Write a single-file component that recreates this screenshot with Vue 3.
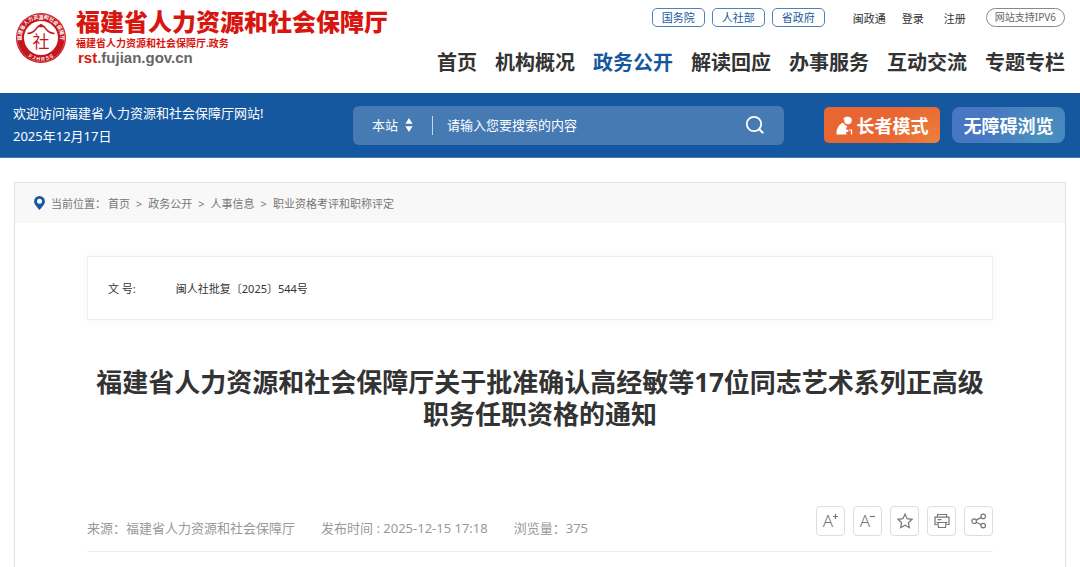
<template>
  <div class="page">
    <header class="header">
      <a class="logo" href="#">
        <svg class="logo__seal" viewBox="0 0 52 52" aria-hidden="true">
          <defs>
            <path id="seal-top" d="M7.4 31.5A19.4 19.4 0 1 1 44.6 31.5" />
            <path id="seal-bottom" d="M6 36.5A22.6 22.6 0 0 0 46 36.5" />
          </defs>
          <circle cx="26" cy="26" r="25" fill="#c4161c" />
          <circle cx="26" cy="26" r="23.8" fill="none" stroke="#e88" stroke-width=".5" />
          <circle cx="26" cy="26" r="17" fill="#fff" />
          <text class="seal-ring" text-anchor="middle">
            <textPath href="#seal-top" startOffset="50%">福建省人力资源和社会保障厅</textPath>
          </text>
          <text class="seal-ring seal-ring--latin" text-anchor="middle">
            <textPath href="#seal-bottom" startOffset="50%">F J H R S S</textPath>
          </text>
          <path
            d="M12.500 21.500c4-.2 6.500-1.800 8.500-4.500l2-2.500h6l2 2.500c2 2.700 4.500 4.300 8.500 4.500M23 14.500l3-2 3 2"
            fill="none"
            stroke="#c4161c"
            stroke-width="1.4"
          />
          <text class="seal-char" x="26" y="36" text-anchor="middle">社</text>
        </svg>
        <span class="logo__text">
          <span class="logo__name">福建省人力资源和社会保障厅</span>
          <span class="logo__sub">福建省人力资源和社会保障厅.政务</span>
          <span class="logo__domain"><b>rst</b>.fujian.gov.cn</span>
        </span>
      </a>
      <div class="header__right">
        <div class="top-links">
          <div class="top-links__gov">
            <a v-for="item in govLinks" :key="item" class="pill" href="#">{{ item }}</a>
          </div>
          <div class="top-links__user">
            <a href="#">闽政通</a>
            <a href="#">登录</a>
            <a class="register" href="#">注册</a>
          </div>
          <span class="pill pill--gray">网站支持IPV6</span>
        </div>
        <nav class="nav">
          <a
            v-for="item in navItems"
            :key="item"
            href="#"
            :class="{ active: item === activeNav }"
            >{{ item }}</a
          >
        </nav>
      </div>
    </header>

    <section class="banner">
      <div class="banner__welcome">
        <div>欢迎访问福建省人力资源和社会保障厅网站!</div>
        <div>2025年12月17日</div>
      </div>
      <form class="search" @submit.prevent>
        <label class="search__scope">
          <select v-model="scope" aria-label="搜索范围">
            <option>本站</option>
          </select>
          <svg width="8" height="14" viewBox="0 0 8 14" aria-hidden="true">
            <path d="M4 0l3.600 5.800H.4zM4 14L.4 8.200h7.200z" fill="#fff" />
          </svg>
        </label>
        <input v-model="keyword" type="text" placeholder="请输入您要搜索的内容" aria-label="搜索" />
        <button class="search__btn" type="submit" aria-label="搜索">
          <svg width="20" height="20" viewBox="0 0 20 20" aria-hidden="true">
            <circle cx="9" cy="9" r="7.200" fill="none" stroke="#fff" stroke-width="1.800" />
            <path d="M14.300 14.300l3.200 3.200" stroke="#fff" stroke-width="2.200" stroke-linecap="round" />
          </svg>
        </button>
      </form>
      <div class="banner__modes">
        <button class="mode mode--elder" type="button">
          <svg width="17" height="19" viewBox="0 0 17 19" aria-hidden="true">
            <circle cx="12" cy="4.500" r="3.700" fill="#fff" />
            <path d="M7 3l2.500-2.300 3 .3-3 3z" fill="#fff" />
            <path
              d="M.5 18.500C.3 12.500 3 8 7.200 6.800c1.200 2 2.600 3 4.200 3.300l-1.400 3 2.600 1.500-.7 1.700-2-.7.6 2.900z"
              fill="#fff"
            />
            <path d="M13 14h2.500v4.500" fill="none" stroke="#fff" stroke-width="1.200" />
          </svg>
          长者模式
        </button>
        <button class="mode mode--access" type="button">无障碍浏览</button>
      </div>
    </section>

    <main class="main">
      <div class="crumbs">
        <svg width="11" height="14" viewBox="0 0 11 14" aria-hidden="true">
          <path
            d="M5.500 0A5.400 5.400 0 0 0 .1 5.400C.1 8.800 3.200 10.800 5.500 14c2.300-3.200 5.400-5.200 5.400-8.600A5.400 5.400 0 0 0 5.500 0z"
            fill="#16589f"
          />
          <circle cx="5.500" cy="5.300" r="2.500" fill="#fff" />
        </svg>
        <span class="crumbs__label">当前位置：</span>
        <template v-for="(item, i) in crumbs" :key="item">
          <span v-if="i">&gt;</span>
          <a href="#">{{ item }}</a>
        </template>
      </div>

      <article class="article">
        <dl class="doc">
          <dt>文 号:</dt>
          <dd>闽人社批复〔2025〕544号</dd>
        </dl>
        <h1 class="title">
          福建省人力资源和社会保障厅关于批准确认高经敏等17位同志艺术系列正高级<br />职务任职资格的通知
        </h1>
        <div class="meta">
          <div class="meta__info">
            <span>来源：福建省人力资源和社会保障厅</span>
            <span>发布时间 : 2025-12-15 17:18</span>
            <span>浏览量：375</span>
          </div>
          <div class="tools">
            <button type="button" aria-label="放大字号">
              <span class="letter">A</span>
              <svg class="sign" viewBox="0 0 5 5"><path d="M0 2.500h5M2.500 0v5" /></svg>
            </button>
            <button type="button" aria-label="缩小字号">
              <span class="letter">A</span>
              <svg class="sign" viewBox="0 0 5 5"><path d="M0 2.500h5" /></svg>
            </button>
            <button type="button" aria-label="收藏">
              <svg class="icon" viewBox="0 0 16 16">
                <path
                  d="M8 1.200l2.100 4.500 4.900.6-3.600 3.400.9 5L8 12.300l-4.300 2.400.9-5L1 6.300l4.900-.6z"
                />
              </svg>
            </button>
            <button type="button" aria-label="打印">
              <svg class="icon" viewBox="0 0 16 16">
                <path d="M3.500 4V1.500h9V4M3.500 11.500h-2.500V4.200h14v7.300h-2.500" />
                <path d="M2.500 9.500h11M4 9.500l.5 5h7l.5-5M3.500 6.700h4" />
              </svg>
            </button>
            <button type="button" aria-label="分享">
              <svg class="icon" viewBox="0 0 16 16">
                <circle cx="3.200" cy="8.200" r="2.300" />
                <circle cx="12.200" cy="3.400" r="2.300" />
                <circle cx="12.200" cy="12.600" r="2.300" />
                <path d="M5.200 7.100l5-2.700M5.200 9.300l5 2.400" />
              </svg>
            </button>
          </div>
        </div>
      </article>
    </main>
  </div>
</template>

<script setup>
import { ref } from "vue";

const govLinks = ["国务院", "人社部", "省政府"];
const navItems = [
  "首页",
  "机构概况",
  "政务公开",
  "解读回应",
  "办事服务",
  "互动交流",
  "专题专栏",
];
const activeNav = ref("政务公开");
const crumbs = ["首页", "政务公开", "人事信息", "职业资格考评和职称评定"];
const scope = ref("本站");
const keyword = ref("");
</script>

<style>
body {
  margin: 0;
  background: #fff;
}
</style>

<style scoped>
.page {
  display: flex;
  flex-direction: column;
  min-height: 100vh;
  font-family: "Noto Sans", "Noto Sans CJK SC", sans-serif;
  font-size: 13px;
  color: #333;
}
.page * {
  box-sizing: border-box;
}
a {
  color: inherit;
  text-decoration: none;
}
button,
input,
select {
  font: inherit;
  color: inherit;
  border: 0;
  background: none;
  padding: 0;
  margin: 0;
  outline: none;
}
button {
  cursor: pointer;
}

.header {
  display: flex;
  justify-content: space-between;
  padding: 8px 15px 0;
  height: 93px;
}
.logo {
  display: flex;
  gap: 9px;
  align-items: flex-start;
}
.logo__seal {
  width: 52px;
  height: 52px;
  margin-top: 4px;
}
.seal-ring {
  font-size: 5px;
  font-weight: 700;
  fill: #fff;
}
.seal-ring--latin {
  font-family: "Liberation Sans", sans-serif;
}
.seal-char {
  font-size: 17px;
  fill: #c4161c;
}
.logo__text {
  display: flex;
  flex-direction: column;
  white-space: nowrap;
  color: #d7160f;
}
.logo__name {
  font-size: 24px;
  font-weight: 900;
  line-height: 28px;
}
.logo__sub {
  font-size: 10px;
  font-weight: 700;
  line-height: 14px;
}
.logo__domain {
  padding-left: 2px;
  font-family: "Liberation Sans", sans-serif;
  font-size: 15px;
  font-weight: 700;
  line-height: 16px;
  color: #666;
}
.logo__domain b {
  color: #d7160f;
}

.header__right {
  display: flex;
  flex-direction: column;
  align-items: flex-end;
  gap: 21px;
}
.top-links {
  display: flex;
  align-items: center;
  font-size: 11px;
}
.top-links__gov {
  display: flex;
  gap: 7px;
  margin-right: 28px;
}
.top-links__user {
  display: flex;
  gap: 16px;
  margin-right: 20px;
}
.register {
  margin-left: 4px;
}
.pill {
  padding: 0 9px;
  border: 1px solid #4f82bd;
  border-radius: 5px;
  line-height: 17px;
  color: #16589f;
}
.pill--gray {
  padding: 0 8px;
  border-color: #888;
  border-radius: 10px;
  font-size: 10px;
  color: #666;
}
.nav {
  display: flex;
  gap: 18px;
  font-size: 20px;
  font-weight: 700;
  line-height: 30px;
  white-space: nowrap;
}
.nav .active {
  color: #16589f;
}

.banner {
  display: flex;
  align-items: center;
  height: 65px;
  padding: 0 15px 0 13px;
  background: #16589f;
  border-bottom: 1px solid #4079b3;
  color: #fff;
}
.banner__welcome {
  flex: 0 0 340px;
  line-height: 23px;
}
.search {
  display: flex;
  align-items: center;
  flex: 1;
  height: 39px;
  padding: 0 19px;
  border-radius: 6px;
  background: #467ab3;
}
.search__scope {
  display: flex;
  align-items: center;
  gap: 6px;
  width: 61px;
  height: 19px;
  border-right: 1px solid #c8d7e8;
}
.search__scope select {
  appearance: none;
  width: 27px;
  height: 20px;
}
.search input {
  flex: 1;
  min-width: 0;
  height: 24px;
  padding-left: 14px;
}
.search input::placeholder {
  color: #fff;
  opacity: 1;
}
.search__btn {
  display: flex;
}
.banner__modes {
  display: flex;
  gap: 12px;
  margin-left: 40px;
}
.mode {
  display: flex;
  align-items: center;
  justify-content: center;
  gap: 4px;
  width: 116px;
  height: 36px;
  border-radius: 5px;
  font-size: 18px;
  font-weight: 700;
  white-space: nowrap;
}
.mode--elder {
  background: radial-gradient(circle at 95% 100%, #ed7f3c, #e86632 40%);
}
.mode--access {
  width: 113px;
  border-radius: 8px;
  background: radial-gradient(circle at 80% 80%, #4792bb, #4776c2 65%);
}

.main {
  flex: 1;
  margin: 24px 14px 0;
  border: 1px solid #e2e2e2;
  border-bottom: 0;
}
.crumbs {
  display: flex;
  align-items: center;
  gap: 6px;
  height: 40px;
  padding-left: 19px;
  background: #f8f8f8;
  font-size: 11px;
  color: #777;
}
.crumbs__label {
  margin-right: -4px;
}
.article {
  padding: 33px 72px 0;
}
.doc {
  display: flex;
  align-items: center;
  gap: 40px;
  height: 64px;
  margin: 0;
  padding: 0 20px;
  border: 1px solid #eee;
  box-shadow: 0 0 12px rgba(0, 0, 0, 0.04);
  font-size: 11px;
}
.doc dd {
  margin: 0;
}
.title {
  margin: 46px 0 0;
  font-size: 26px;
  font-weight: 700;
  line-height: 32px;
  text-align: center;
}
.meta {
  display: flex;
  justify-content: space-between;
  align-items: center;
  margin-top: 74px;
  padding-bottom: 14px;
  border-bottom: 1px solid #eee;
  color: #999;
}
.meta__info {
  display: flex;
  gap: 26px;
  padding-top: 14px;
}
.tools {
  display: flex;
  gap: 8px;
}
.tools button {
  display: flex;
  align-items: center;
  justify-content: center;
  width: 29px;
  height: 30px;
  border: 1px solid #ddd;
  border-radius: 4px;
  color: #777;
}
.tools svg {
  fill: none;
  stroke: #777;
  stroke-width: 1.2;
}
.letter {
  font-size: 17px;
  font-weight: 300;
  line-height: 20px;
}
.sign {
  width: 5px;
  height: 5px;
  margin-bottom: 8px;
}
.icon {
  width: 16px;
  height: 16px;
}
</style>
